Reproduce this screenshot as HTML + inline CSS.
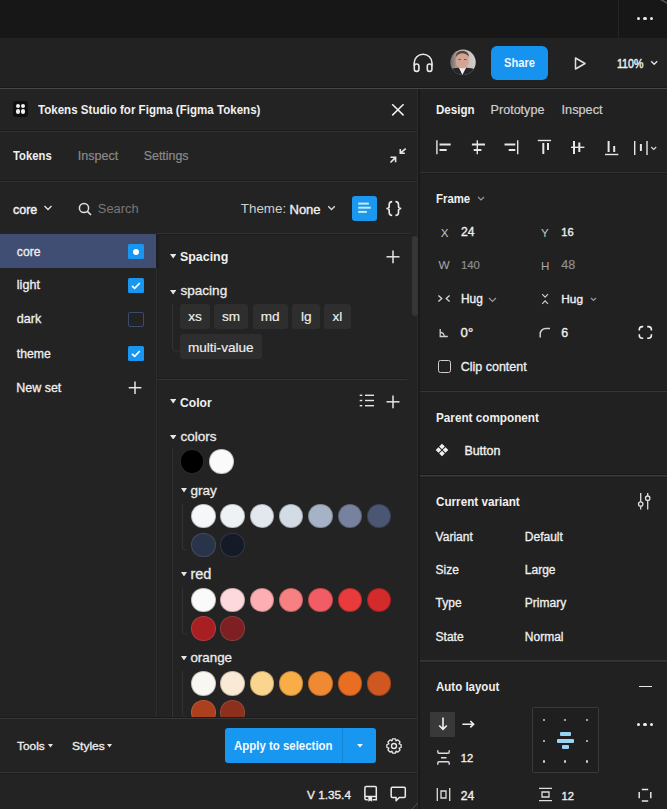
<!DOCTYPE html><html><head><meta charset="utf-8"><style>
html,body{margin:0;padding:0;width:667px;height:809px;overflow:hidden;background:#232323}
body{position:relative;font-family:"Liberation Sans",sans-serif}
.t{position:absolute;line-height:1;white-space:nowrap}
.r{position:absolute;display:block}
.chip{position:absolute;background:#2e2e2e;border-radius:3px;color:#f0f0f0;font-size:13.6px;line-height:24.5px;text-align:center;font-family:"Liberation Sans",sans-serif;-webkit-text-stroke:0.15px #f0f0f0}
.c{position:absolute;width:24.5px;height:24.5px;border-radius:50%;box-sizing:border-box;border:1px solid rgba(255,255,255,0.1)}
</style></head><body>
<div class="r" style="left:0px;top:0px;width:667px;height:38px;background:#171717;"></div>
<div class="r" style="left:618px;top:0px;width:1px;height:38px;background:#242424;"></div>
<div class="r" style="left:0px;top:38px;width:667px;height:50px;background:#222222;"></div>
<div class="r" style="left:0px;top:87px;width:667px;height:1px;background:#1a1a1a;"></div>
<div class="r" style="left:0px;top:88px;width:667px;height:1px;background:#464646;"></div>
<div class="r" style="left:0px;top:89px;width:418px;height:720px;background:#232323;"></div>
<div class="r" style="left:416.6px;top:89px;width:1px;height:720px;background:#2c2c2c;"></div>
<div class="r" style="left:418px;top:89px;width:2.2px;height:720px;background:#1a1a1a;"></div>
<div class="r" style="left:420.2px;top:89px;width:247px;height:720px;background:#212121;"></div>
<div class="r" style="left:637.1px;top:17.3px;width:3.2px;height:3.2px;background:#e8e8e8;border-radius:50%"></div>
<div class="r" style="left:643.4px;top:17.3px;width:3.2px;height:3.2px;background:#e8e8e8;border-radius:50%"></div>
<div class="r" style="left:649.6px;top:17.3px;width:3.2px;height:3.2px;background:#e8e8e8;border-radius:50%"></div>
<svg class="r" style="left:659px;top:0px;" width="8" height="5" viewBox="0 0 8 5" fill="none"><path d="M1.5 -0.5 L8.5 3.2" stroke="#5a5a5a" stroke-width="1.4" /></svg>
<svg class="r" style="left:411px;top:50px;" width="24" height="24" viewBox="0 0 24 24" fill="none"><path d="M3.2 16 V13.1 A8.9 8.9 0 0 1 21 13.1 V16" stroke="#e8e8e8" stroke-width="1.6" /><rect x="3.3" y="14" width="4.6" height="7.4" rx="2.2" stroke="#e8e8e8" stroke-width="1.6"/><rect x="16.3" y="14" width="4.6" height="7.4" rx="2.2" stroke="#e8e8e8" stroke-width="1.6"/></svg>
<svg class="r" style="left:450px;top:49px;" width="27" height="27" viewBox="0 0 27 27" fill="none"><defs><clipPath id="av"><circle cx="13" cy="13.2" r="12.7"/></clipPath><linearGradient id="ag" x1="0" y1="0" x2="1" y2="0"><stop offset="0" stop-color="#6e6462"/><stop offset="0.35" stop-color="#bdb3b0"/><stop offset="1" stop-color="#d6d0ce"/></linearGradient></defs><g clip-path="url(#av)"><rect width="27" height="27" fill="url(#ag)"/><ellipse cx="12.3" cy="11.5" rx="6.6" ry="8.3" fill="#d3a493"/><path d="M5.8 8 Q6 2 12.5 1.8 Q18.8 2 19 8 Q16 4.2 12.4 4.3 Q8.6 4.2 5.8 8 Z" fill="#5a4038"/><path d="M8.3 10.5 H10.8 M14 10.5 H16.5" stroke="#7a5048" stroke-width="1"/><path d="M0 27 V21 Q4 18.5 9 18.8 L12.4 23.5 L16 18.8 Q21 18.5 27 21 V27 Z" fill="#26262a"/><path d="M9 18.8 L12.4 26 L16 18.8 Q12.4 20.2 9 18.8 Z" fill="#eeeeee"/></g></svg>
<div class="r" style="left:491px;top:46px;width:57px;height:34px;background:#1692ef;border-radius:6px"></div>
<div class="t" style="left:503.8px;top:57.40px;font-size:12.05px;font-weight:700;color:#eef6ff;transform:scaleX(0.9259259259259258);transform-origin:0 0;">Share</div>
<svg class="r" style="left:573px;top:56px;" width="14" height="15" viewBox="0 0 14 15" fill="none"><path d="M2.5 2 L12 7.5 L2.5 13 Z" stroke="#e0e0e0" stroke-width="1.5" stroke-linejoin="round"/></svg>
<div class="t" style="left:617.1px;top:57.50px;font-size:12.40px;font-weight:400;color:#f0f0f0;-webkit-text-stroke:0.45px #f0f0f0;transform:scaleX(0.857346407324791);transform-origin:0 0;">110%</div>
<svg class="r" style="left:649.5px;top:60px;" width="9" height="6" viewBox="0 0 9 6" fill="none"><path d="M1.2 1.3 L4.2 4.3 L7.2 1.3" stroke="#e0e0e0" stroke-width="1.4" /></svg>
<div class="r" style="left:13px;top:101px;width:15px;height:16px;background:#0f0f0f;border-radius:3px"></div>
<div class="r" style="left:16.2px;top:104.2px;width:4.2px;height:4.2px;background:#f0f0f0;border-radius:50%"></div>
<div class="r" style="left:20.9px;top:104.2px;width:4.2px;height:4.2px;background:#f0f0f0;border-radius:50%"></div>
<div class="r" style="left:16.2px;top:109.4px;width:4.2px;height:4.2px;background:#f0f0f0;border-radius:50%"></div>
<div class="r" style="left:20.9px;top:109.4px;width:4.2px;height:4.2px;background:#f0f0f0;border-radius:50%"></div>
<div class="t" style="left:38px;top:103.83px;font-size:12.49px;font-weight:700;color:#f0f0f0;transform:scaleX(0.9259259259259258);transform-origin:0 0;">Tokens Studio for Figma (Figma Tokens)</div>
<svg class="r" style="left:390px;top:102px;" width="16" height="16" viewBox="0 0 16 16" fill="none"><path d="M2.2 2.3 L13.6 13.4 M13.6 2.3 L2.2 13.4" stroke="#f0f0f0" stroke-width="1.5" /></svg>
<div class="r" style="left:0px;top:130px;width:416.6px;height:1px;background:#1c1c1c;"></div>
<div class="r" style="left:0px;top:131px;width:416.6px;height:1px;background:#303030;"></div>
<div class="t" style="left:435.6px;top:104.31px;font-size:12.50px;font-weight:700;color:#f0f0f0;transform:scaleX(0.9259259259259258);transform-origin:0 0;">Design</div>
<div class="t" style="left:490.6px;top:104.26px;font-size:12.57px;font-weight:400;color:#cfcfcf;-webkit-text-stroke:0.2px #cfcfcf;">Prototype</div>
<div class="t" style="left:561.6px;top:104.16px;font-size:12.69px;font-weight:400;color:#cfcfcf;-webkit-text-stroke:0.2px #cfcfcf;">Inspect</div>
<div class="t" style="left:13.2px;top:149.97px;font-size:12.20px;font-weight:700;color:#f0f0f0;transform:scaleX(0.9259259259259258);transform-origin:0 0;">Tokens</div>
<div class="t" style="left:77.7px;top:149.67px;font-size:12.56px;font-weight:400;color:#8a8a8a;-webkit-text-stroke:0.2px #8a8a8a;">Inspect</div>
<div class="t" style="left:143.7px;top:149.78px;font-size:12.43px;font-weight:400;color:#8a8a8a;-webkit-text-stroke:0.2px #8a8a8a;">Settings</div>
<svg class="r" style="left:388px;top:145.2px;" width="20" height="20" viewBox="0 0 20 20" fill="none"><path d="M17.7 3.6 L12.3 8.2 M12.3 4.1 V8.3 H16.8 M2.5 17.5 L7.6 12.4 M2.5 12.2 H7.6 V17.2" stroke="#e6e6e6" stroke-width="1.6" /></svg>
<div class="r" style="left:0px;top:180px;width:416.6px;height:1px;background:#1c1c1c;"></div>
<div class="r" style="left:0px;top:181px;width:416.6px;height:1px;background:#303030;"></div>
<svg class="r" style="left:430px;top:135px;" width="240" height="25" viewBox="0 0 240 25" fill="none"><path d="M6.9 5.2 L6.9 19.2" stroke="#e6e6e6" stroke-width="1.4" /><path d="M9.5 9.5 L20.7 9.5" stroke="#e6e6e6" stroke-width="2" /><path d="M9.5 15 L16.7 15" stroke="#e6e6e6" stroke-width="2" /><path d="M47.3 5.2 L47.3 19.2" stroke="#e6e6e6" stroke-width="1.4" /><path d="M41.9 9.5 L55 9.5" stroke="#e6e6e6" stroke-width="2" /><path d="M43.7 15 L51.4 15" stroke="#e6e6e6" stroke-width="2" /><path d="M87.7 5.2 L87.7 19.2" stroke="#e6e6e6" stroke-width="1.4" /><path d="M74.5 9.5 L85.3 9.5" stroke="#e6e6e6" stroke-width="2" /><path d="M78.7 15 L85.3 15" stroke="#e6e6e6" stroke-width="2" /><path d="M107.8 5.5 L121.1 5.5" stroke="#e6e6e6" stroke-width="1.4" /><path d="M113.3 8 L113.3 19" stroke="#e6e6e6" stroke-width="2" /><path d="M118 8 L118 15" stroke="#e6e6e6" stroke-width="2" /><path d="M141 12.3 L154.4 12.3" stroke="#e6e6e6" stroke-width="1.4" /><path d="M144 6 L144 19" stroke="#e6e6e6" stroke-width="2" /><path d="M149.3 7.5 L149.3 17" stroke="#e6e6e6" stroke-width="2" /><path d="M175 19.5 L188.3 19.5" stroke="#e6e6e6" stroke-width="1.4" /><path d="M178.6 6 L178.6 17" stroke="#e6e6e6" stroke-width="2" /><path d="M184.2 11 L184.2 17" stroke="#e6e6e6" stroke-width="2" /><path d="M204.7 6 L204.7 20" stroke="#e6e6e6" stroke-width="1.4" /><path d="M217 6 L217 20" stroke="#e6e6e6" stroke-width="1.4" /><path d="M210.9 9 L210.9 16" stroke="#e6e6e6" stroke-width="2" /><path d="M221.2 12 L223.7 14.5 L226.2 12" stroke="#d8d8d8" stroke-width="1.2" /></svg>
<div class="r" style="left:420.2px;top:173px;width:248px;height:1px;background:#1c1c1c;"></div>
<div class="r" style="left:420.2px;top:172px;width:248px;height:1px;background:#333333;"></div>
<div class="t" style="left:12.5px;top:203.50px;font-size:12.40px;font-weight:400;color:#f0f0f0;-webkit-text-stroke:0.45px #f0f0f0;transform:scaleX(1.0033193493971533);transform-origin:0 0;">core</div>
<svg class="r" style="left:43px;top:204px;" width="10" height="8" viewBox="0 0 10 8" fill="none"><path d="M1.5 2 L5 5.5 L8.5 2" stroke="#e0e0e0" stroke-width="1.4" /></svg>
<svg class="r" style="left:77.5px;top:202px;" width="14" height="14" viewBox="0 0 14 14" fill="none"><circle cx="6" cy="6" r="4.6" stroke="#e0e0e0" stroke-width="1.5"/><path d="M9.4 9.4 L13 13" stroke="#e0e0e0" stroke-width="1.6" /></svg>
<div class="t" style="left:97.8px;top:202.90px;font-size:12.88px;font-weight:400;color:#787878;">Search</div>
<div class="t" style="left:240.8px;top:202.49px;font-size:13.36px;font-weight:400;color:#cfcfcf;">Theme:</div>
<div class="t" style="left:289.5px;top:202.79px;font-size:13.01px;font-weight:400;color:#f0f0f0;-webkit-text-stroke:0.35px #f0f0f0;">None</div>
<svg class="r" style="left:327px;top:205px;" width="9" height="7" viewBox="0 0 9 7" fill="none"><path d="M1.2 1.2 L4.5 4.5 L7.8 1.2" stroke="#d8d8d8" stroke-width="1.3" /></svg>
<div class="r" style="left:352px;top:196px;width:25.3px;height:25px;background:#1b98ee;border-radius:3px"></div>
<svg class="r" style="left:352px;top:196px;" width="26" height="25" viewBox="0 0 26 25" fill="none"><path d="M6.2 7.6 L16.9 7.6" stroke="#bfeaff" stroke-width="2" /><path d="M6.2 11.7 L18.8 11.7" stroke="#bfeaff" stroke-width="2" /><path d="M6.2 15.9 L14.9 15.9" stroke="#bfeaff" stroke-width="2" /></svg>
<svg class="r" style="left:385px;top:200px;" width="18" height="17" viewBox="0 0 18 17" fill="none"><path d="M7.2 1.6 Q4.2 1.6 4.2 4.6 V6.5 Q4.2 8.5 1.4 8.5 Q4.2 8.5 4.2 10.5 V12.4 Q4.2 15.4 7.2 15.4 M10.5 1.6 Q13.5 1.6 13.5 4.6 V6.5 Q13.5 8.5 16.3 8.5 Q13.5 8.5 13.5 10.5 V12.4 Q13.5 15.4 10.5 15.4" stroke="#ececec" stroke-width="1.6" /></svg>
<div class="r" style="left:157px;top:234px;width:254px;height:1px;background:#1c1c1c;"></div>
<div class="r" style="left:157px;top:233px;width:254px;height:1px;background:#343434;"></div>
<div class="r" style="left:0px;top:233.5px;width:156.3px;height:34.6px;background:#414e74;"></div>
<div class="r" style="left:156.3px;top:234px;width:2.5px;height:34.3px;background:#1d1d22;"></div>
<div class="r" style="left:156.3px;top:268.3px;width:1px;height:450px;background:#2e2e2e;"></div>
<div class="r" style="left:157.3px;top:268.3px;width:1px;height:450px;background:#1f1f1f;"></div>
<div class="t" style="left:16.8px;top:245.99px;font-size:12.18px;font-weight:400;color:#f0f0f0;-webkit-text-stroke:0.3px #f0f0f0;">core</div>
<div class="t" style="left:16.8px;top:279.44px;font-size:12.59px;font-weight:400;color:#f0f0f0;-webkit-text-stroke:0.3px #f0f0f0;">light</div>
<div class="t" style="left:16.8px;top:313.44px;font-size:12.60px;font-weight:400;color:#f0f0f0;-webkit-text-stroke:0.3px #f0f0f0;">dark</div>
<div class="t" style="left:16.8px;top:347.74px;font-size:12.23px;font-weight:400;color:#f0f0f0;-webkit-text-stroke:0.3px #f0f0f0;">theme</div>
<div class="t" style="left:16.3px;top:381.95px;font-size:12.46px;font-weight:400;color:#f0f0f0;-webkit-text-stroke:0.3px #f0f0f0;">New set</div>
<div class="r" style="left:128.3px;top:244.3px;width:15.5px;height:15px;background:#1896f0;border-radius:1.5px"></div>
<div class="r" style="left:132.8px;top:248.60000000000002px;width:6.5px;height:6.5px;background:#fff;border-radius:50%"></div>
<div class="r" style="left:128.3px;top:278.3px;width:15.5px;height:15px;background:#1896f0;border-radius:1.5px"></div>
<svg class="r" style="left:128.3px;top:278.3px;" width="15.5" height="15" viewBox="0 0 15.5 15" fill="none"><path d="M4 7.8 L6.7 10.3 L11.8 5" stroke="#fff" stroke-width="1.7" /></svg>
<div class="r" style="left:128.3px;top:312.3px;width:15.5px;height:15px;background:#232323;border:1px solid #3b4b6b;box-sizing:border-box;border-radius:2px"></div>
<div class="r" style="left:128.3px;top:346.3px;width:15.5px;height:15px;background:#1896f0;border-radius:1.5px"></div>
<svg class="r" style="left:128.3px;top:346.3px;" width="15.5" height="15" viewBox="0 0 15.5 15" fill="none"><path d="M4 7.8 L6.7 10.3 L11.8 5" stroke="#fff" stroke-width="1.7" /></svg>
<svg class="r" style="left:128px;top:381px;" width="14" height="14" viewBox="0 0 14 14" fill="none"><path d="M7 0.5 L7 13" stroke="#e6e6e6" stroke-width="1.5" /><path d="M0.7 6.7 L13.4 6.7" stroke="#e6e6e6" stroke-width="1.5" /></svg>
<div class="r" style="left:411.5px;top:236px;width:6.3px;height:80px;background:#363636;border-radius:3px"></div>
<svg class="r" style="left:169.8px;top:254px;" width="6.4" height="4.6" viewBox="0 0 6.4 4.6" fill="none"><path d="M0 0 H6.4 L3.2 4.6 Z" fill="#e6e6e6"/></svg>
<div class="t" style="left:180px;top:250.15px;font-size:13.41px;font-weight:700;color:#f0f0f0;transform:scaleX(0.9259259259259258);transform-origin:0 0;">Spacing</div>
<svg class="r" style="left:385.5px;top:249.5px;" width="14" height="14" viewBox="0 0 14 14" fill="none"><path d="M7 0.5 L7 13.2" stroke="#e6e6e6" stroke-width="1.5" /><path d="M0.5 6.8 L13.5 6.8" stroke="#e6e6e6" stroke-width="1.5" /></svg>
<svg class="r" style="left:169.8px;top:290.3px;" width="6.4" height="4.6" viewBox="0 0 6.4 4.6" fill="none"><path d="M0 0 H6.4 L3.2 4.6 Z" fill="#e6e6e6"/></svg>
<div class="t" style="left:180.5px;top:284.23px;font-size:13.55px;font-weight:400;color:#ececec;-webkit-text-stroke:0.3px #ececec;">spacing</div>
<svg class="r" style="left:171px;top:304px;" width="12" height="52" viewBox="0 0 12 52" fill="none"><path d="M1.5 0 V44 Q1.5 47 4.5 47 H9" stroke="#333" stroke-width="1" /></svg>
<div class="chip" style="left:179.6px;top:304px;width:30.7px;height:25px;line-height:26.5px">xs</div>
<div class="chip" style="left:214.3px;top:304px;width:33.5px;height:25px;line-height:26.5px">sm</div>
<div class="chip" style="left:252.7px;top:304px;width:35.1px;height:25px;line-height:26.5px">md</div>
<div class="chip" style="left:292.4px;top:304px;width:27.6px;height:25px;line-height:26.5px">lg</div>
<div class="chip" style="left:324px;top:304px;width:26.8px;height:25px;line-height:26.5px">xl</div>
<div class="chip" style="left:179.6px;top:333.5px;width:82.4px;height:25.5px;line-height:27px">multi-value</div>
<div class="r" style="left:157px;top:378px;width:250px;height:1px;background:#1c1c1c;"></div>
<div class="r" style="left:157px;top:379px;width:250px;height:1px;background:#343434;"></div>
<svg class="r" style="left:169.8px;top:399px;" width="6.4" height="4.6" viewBox="0 0 6.4 4.6" fill="none"><path d="M0 0 H6.4 L3.2 4.6 Z" fill="#e6e6e6"/></svg>
<div class="t" style="left:180.2px;top:395.50px;font-size:13.11px;font-weight:700;color:#f0f0f0;transform:scaleX(0.9259259259259258);transform-origin:0 0;">Color</div>
<svg class="r" style="left:359px;top:393px;" width="16" height="15" viewBox="0 0 16 15" fill="none"><path d="M6 2.3 L15 2.3" stroke="#e6e6e6" stroke-width="1.4" /><path d="M6 7.5 L15 7.5" stroke="#e6e6e6" stroke-width="1.4" /><path d="M6 12.7 L15 12.7" stroke="#e6e6e6" stroke-width="1.4" /><path d="M0.7 2.3 L3.3 2.3" stroke="#e6e6e6" stroke-width="1.4" /><path d="M0.7 7.5 L3.3 7.5" stroke="#e6e6e6" stroke-width="1.4" /><path d="M0.7 12.7 L3.3 12.7" stroke="#e6e6e6" stroke-width="1.4" /></svg>
<svg class="r" style="left:385.5px;top:394.5px;" width="14" height="14" viewBox="0 0 14 14" fill="none"><path d="M7 0.5 L7 13.2" stroke="#e6e6e6" stroke-width="1.5" /><path d="M0.5 6.8 L13.5 6.8" stroke="#e6e6e6" stroke-width="1.5" /></svg>
<svg class="r" style="left:169.8px;top:434.5px;" width="6.4" height="4.6" viewBox="0 0 6.4 4.6" fill="none"><path d="M0 0 H6.4 L3.2 4.6 Z" fill="#e6e6e6"/></svg>
<div class="t" style="left:180.5px;top:429.58px;font-size:13.50px;font-weight:400;color:#ececec;-webkit-text-stroke:0.3px #ececec;">colors</div>
<div class="r" style="left:170.8px;top:449px;width:1px;height:269px;background:#1e1e1e;"></div>
<div class="r" style="left:171.8px;top:449px;width:1px;height:269px;background:#343434;"></div>
<div class="c" style="left:179.9px;top:449.0px;background:#000;border-color:rgba(255,255,255,0.16)"></div>
<div class="c" style="left:209.4px;top:449.0px;background:#fafafa;border-color:rgba(0,0,0,0.22)"></div>
<svg class="r" style="left:180.6px;top:488.0px;" width="6" height="4.5" viewBox="0 0 6 4.5" fill="none"><path d="M0 0 H6 L3.0 4.5 Z" fill="#e6e6e6"/></svg>
<div class="t" style="left:190.4px;top:483.51px;font-size:13.57px;font-weight:400;color:#ececec;-webkit-text-stroke:0.3px #ececec;">gray</div>
<svg class="r" style="left:181px;top:503.7px;" width="8" height="51" viewBox="0 0 8 51" fill="none"><path d="M1.5 0 V43 Q1.5 46 4.5 46 H6" stroke="#333" stroke-width="1" /></svg>
<div class="c" style="left:191.0px;top:503.7px;background:#f6f7f9;border-color:rgba(0,0,0,0.22)"></div>
<div class="c" style="left:220.3px;top:503.7px;background:#eef2f5;border-color:rgba(0,0,0,0.22)"></div>
<div class="c" style="left:249.6px;top:503.7px;background:#e3e8ee;border-color:rgba(0,0,0,0.22)"></div>
<div class="c" style="left:278.9px;top:503.7px;background:#d3dbe4;border-color:rgba(0,0,0,0.22)"></div>
<div class="c" style="left:308.2px;top:503.7px;background:#a6b2c5;border-color:rgba(0,0,0,0.22)"></div>
<div class="c" style="left:337.5px;top:503.7px;background:#76829e;border-color:rgba(0,0,0,0.22)"></div>
<div class="c" style="left:366.8px;top:503.7px;background:#4b5672;border-color:rgba(0,0,0,0.22)"></div>
<div class="c" style="left:191.0px;top:532.5px;background:#29334a;border-color:rgba(255,255,255,0.12)"></div>
<div class="c" style="left:220.3px;top:532.5px;background:#151a28;border-color:rgba(255,255,255,0.12)"></div>
<svg class="r" style="left:180.6px;top:571.8px;" width="6" height="4.5" viewBox="0 0 6 4.5" fill="none"><path d="M0 0 H6 L3.0 4.5 Z" fill="#e6e6e6"/></svg>
<div class="t" style="left:190.4px;top:566.50px;font-size:14.53px;font-weight:400;color:#ececec;-webkit-text-stroke:0.3px #ececec;">red</div>
<svg class="r" style="left:181px;top:587.5px;" width="8" height="51" viewBox="0 0 8 51" fill="none"><path d="M1.5 0 V43 Q1.5 46 4.5 46 H6" stroke="#333" stroke-width="1" /></svg>
<div class="c" style="left:191.0px;top:587.5px;background:#fafafa;border-color:rgba(0,0,0,0.22)"></div>
<div class="c" style="left:220.3px;top:587.5px;background:#fdd9dd;border-color:rgba(0,0,0,0.22)"></div>
<div class="c" style="left:249.6px;top:587.5px;background:#fcaeb3;border-color:rgba(0,0,0,0.22)"></div>
<div class="c" style="left:278.9px;top:587.5px;background:#f78182;border-color:rgba(0,0,0,0.22)"></div>
<div class="c" style="left:308.2px;top:587.5px;background:#f25d65;border-color:rgba(0,0,0,0.22)"></div>
<div class="c" style="left:337.5px;top:587.5px;background:#e93a3c;border-color:rgba(0,0,0,0.22)"></div>
<div class="c" style="left:366.8px;top:587.5px;background:#d32a2c;border-color:rgba(0,0,0,0.22)"></div>
<div class="c" style="left:191.0px;top:616.3px;background:#a71f23;border-color:rgba(255,255,255,0.12)"></div>
<div class="c" style="left:220.3px;top:616.3px;background:#7d1f23;border-color:rgba(255,255,255,0.12)"></div>
<svg class="r" style="left:180.6px;top:655.7px;" width="6" height="4.5" viewBox="0 0 6 4.5" fill="none"><path d="M0 0 H6 L3.0 4.5 Z" fill="#e6e6e6"/></svg>
<div class="t" style="left:190.4px;top:651.39px;font-size:13.36px;font-weight:400;color:#ececec;-webkit-text-stroke:0.3px #ececec;">orange</div>
<svg class="r" style="left:181px;top:671.4000000000001px;" width="8" height="51" viewBox="0 0 8 51" fill="none"><path d="M1.5 0 V43 Q1.5 46 4.5 46 H6" stroke="#333" stroke-width="1" /></svg>
<div class="c" style="left:191.0px;top:671.4px;background:#f9f7f2;border-color:rgba(0,0,0,0.22)"></div>
<div class="c" style="left:220.3px;top:671.4px;background:#f8ead4;border-color:rgba(0,0,0,0.22)"></div>
<div class="c" style="left:249.6px;top:671.4px;background:#fad590;border-color:rgba(0,0,0,0.22)"></div>
<div class="c" style="left:278.9px;top:671.4px;background:#f8ad48;border-color:rgba(0,0,0,0.22)"></div>
<div class="c" style="left:308.2px;top:671.4px;background:#f08a32;border-color:rgba(0,0,0,0.22)"></div>
<div class="c" style="left:337.5px;top:671.4px;background:#e96e22;border-color:rgba(0,0,0,0.22)"></div>
<div class="c" style="left:366.8px;top:671.4px;background:#cf5720;border-color:rgba(0,0,0,0.22)"></div>
<div class="c" style="left:191.0px;top:700.2px;background:#ac401e;border-color:rgba(255,255,255,0.12)"></div>
<div class="c" style="left:220.3px;top:700.2px;background:#8c301d;border-color:rgba(255,255,255,0.12)"></div>
<div class="r" style="left:0px;top:718.5px;width:416.5px;height:91px;background:#232323;"></div>
<div class="r" style="left:0px;top:717px;width:416.6px;height:1px;background:#1c1c1c;"></div>
<div class="r" style="left:0px;top:718px;width:416.6px;height:1px;background:#363636;"></div>
<div class="t" style="left:17.3px;top:740.93px;font-size:11.30px;font-weight:400;color:#f0f0f0;-webkit-text-stroke:0.3px #f0f0f0;transform:scaleX(1.0501001054364953);transform-origin:0 0;">Tools</div>
<svg class="r" style="left:47.8px;top:744px;" width="5" height="3.5" viewBox="0 0 5 3.5" fill="none"><path d="M0 0 H5 L2.5 3.5 Z" fill="#e6e6e6"/></svg>
<div class="t" style="left:72px;top:740.93px;font-size:11.30px;font-weight:400;color:#f0f0f0;-webkit-text-stroke:0.3px #f0f0f0;transform:scaleX(1.0659278833166441);transform-origin:0 0;">Styles</div>
<svg class="r" style="left:107.2px;top:744px;" width="5" height="3.5" viewBox="0 0 5 3.5" fill="none"><path d="M0 0 H5 L2.5 3.5 Z" fill="#e6e6e6"/></svg>
<div class="r" style="left:224.5px;top:727.6px;width:151.4px;height:35.8px;background:#1797f0;border-radius:3px"></div>
<div class="r" style="left:342px;top:727.6px;width:1px;height:35.8px;background:#1484d6;"></div>
<div class="t" style="left:234.4px;top:740.03px;font-size:12.37px;font-weight:700;color:#f4faff;transform:scaleX(0.9259259259259258);transform-origin:0 0;">Apply to selection</div>
<svg class="r" style="left:356.8px;top:744.2px;" width="6" height="3.6" viewBox="0 0 6 3.6" fill="none"><path d="M0 0 H6 L3.0 3.6 Z" fill="#f4faff"/></svg>
<svg class="r" style="left:385px;top:737px;" width="18" height="18" viewBox="0 0 18 18" fill="none"><circle cx="9" cy="9" r="2.5" stroke="#e8e8e8" stroke-width="1.4"/><path d="M7.5 1.8 H10.5 L11 3.8 L12.9 2.9 L15 5 L14.1 6.9 L16.1 7.5 V10.5 L14.1 11.1 L15 13 L12.9 15.1 L11 14.2 L10.5 16.2 H7.5 L7 14.2 L5.1 15.1 L3 13 L3.9 11.1 L1.9 10.5 V7.5 L3.9 6.9 L3 5 L5.1 2.9 L7 3.8 Z" stroke="#e8e8e8" stroke-width="1.3" stroke-linejoin="round"/></svg>
<div class="r" style="left:0px;top:773px;width:416.6px;height:1px;background:#1c1c1c;"></div>
<div class="r" style="left:0px;top:772px;width:416.6px;height:1px;background:#343434;"></div>
<div class="t" style="left:307px;top:789.50px;font-size:11.81px;font-weight:400;color:#ececec;-webkit-text-stroke:0.35px #ececec;">V 1.35.4</div>
<svg class="r" style="left:362px;top:784px;" width="17" height="19" viewBox="0 0 17 19" fill="none"><path d="M5.8 15.8 H4.2 Q2.9 15.8 2.9 14.5 V3.7 Q2.9 2.4 4.2 2.4 H13.1 Q14.3 2.4 14.3 3.6 V15.8 H10.6 M2.9 12.6 H14.3" stroke="#ececec" stroke-width="1.5" /><path d="M6.3 13 H10.1 V17.8 L8.2 16.4 L6.3 17.8 Z" fill="#ececec"/></svg>
<svg class="r" style="left:389px;top:784px;" width="18" height="19" viewBox="0 0 18 19" fill="none"><path d="M3.3 3.3 H15.2 Q16.3 3.3 16.3 4.4 V12.3 Q16.3 13.4 15.2 13.4 H10.3 L7.1 16.8 V13.4 H3.3 Q2.2 13.4 2.2 12.3 V4.4 Q2.2 3.3 3.3 3.3 Z" stroke="#ececec" stroke-width="1.5" stroke-linejoin="round"/></svg>
<svg class="r" style="left:406px;top:795px;" width="12" height="14" viewBox="0 0 12 14" fill="none"><path d="M12 8 L6 14" stroke="#505050" stroke-width="1" /></svg>
<div class="t" style="left:435.8px;top:193.08px;font-size:12.31px;font-weight:700;color:#f0f0f0;transform:scaleX(0.9259259259259258);transform-origin:0 0;">Frame</div>
<svg class="r" style="left:476.5px;top:196px;" width="8" height="6" viewBox="0 0 8 6" fill="none"><path d="M1 1 L4 4 L7 1" stroke="#9a9a9a" stroke-width="1.2" /></svg>
<div class="t" style="left:440.8px;top:226.88px;font-size:11.60px;font-weight:400;color:#c4c4c4;">X</div>
<div class="t" style="left:461px;top:226.42px;font-size:12.14px;font-weight:400;color:#f0f0f0;-webkit-text-stroke:0.35px #f0f0f0;">24</div>
<div class="t" style="left:540.9px;top:226.68px;font-size:11.60px;font-weight:400;color:#c4c4c4;">Y</div>
<div class="t" style="left:561.3px;top:227.06px;font-size:11.15px;font-weight:400;color:#f0f0f0;-webkit-text-stroke:0.35px #f0f0f0;">16</div>
<div class="t" style="left:438.5px;top:260.01px;font-size:11.80px;font-weight:400;color:#aaaaaa;">W</div>
<div class="t" style="left:461px;top:260.41px;font-size:11.33px;font-weight:400;color:#8e8e8e;-webkit-text-stroke:0.2px #8e8e8e;">140</div>
<div class="t" style="left:540.9px;top:260.18px;font-size:11.60px;font-weight:400;color:#aaaaaa;">H</div>
<div class="t" style="left:561.3px;top:259.34px;font-size:12.59px;font-weight:400;color:#8e8e8e;-webkit-text-stroke:0.2px #8e8e8e;">48</div>
<svg class="r" style="left:437px;top:294px;" width="14" height="9" viewBox="0 0 14 9" fill="none"><path d="M1.4 1.5 L4.8 4.5 L1.4 7.5 M12.6 1.5 L9.2 4.5 L12.6 7.5" stroke="#d8d8d8" stroke-width="1.3" /></svg>
<div class="t" style="left:461px;top:294.04px;font-size:11.88px;font-weight:400;color:#f0f0f0;-webkit-text-stroke:0.35px #f0f0f0;">Hug</div>
<svg class="r" style="left:488px;top:297px;" width="9" height="6" viewBox="0 0 9 6" fill="none"><path d="M1 1 L4.5 4.5 L8 1" stroke="#9a9a9a" stroke-width="1.2" /></svg>
<svg class="r" style="left:540.5px;top:293px;" width="9" height="12" viewBox="0 0 9 12" fill="none"><path d="M1.2 1.2 L4.1 4.1 L7 1.2 M1.2 10.8 L4.1 7.9 L7 10.8" stroke="#d0d0d0" stroke-width="1.2" /></svg>
<div class="t" style="left:561.3px;top:293.89px;font-size:11.83px;font-weight:400;color:#f0f0f0;-webkit-text-stroke:0.35px #f0f0f0;">Hug</div>
<svg class="r" style="left:589.5px;top:296.5px;" width="8" height="6" viewBox="0 0 8 6" fill="none"><path d="M1 1 L3.5 3.5 L6 1" stroke="#9a9a9a" stroke-width="1.2" /></svg>
<svg class="r" style="left:438px;top:327px;" width="11" height="11" viewBox="0 0 11 11" fill="none"><path d="M2.2 2 V9.5 H9.8 M2.2 5.2 Q5.9 5.8 6.3 9.5" stroke="#d0d0d0" stroke-width="1.3" /></svg>
<div class="t" style="left:460.6px;top:326.34px;font-size:13.18px;font-weight:400;color:#f0f0f0;-webkit-text-stroke:0.35px #f0f0f0;">0°</div>
<svg class="r" style="left:539px;top:327px;" width="12" height="11" viewBox="0 0 12 11" fill="none"><path d="M1.2 10.5 V7 A5.5 5.5 0 0 1 6.7 1.5 H11" stroke="#d0d0d0" stroke-width="1.5" /></svg>
<div class="t" style="left:561.3px;top:327.00px;font-size:12.41px;font-weight:400;color:#f0f0f0;-webkit-text-stroke:0.35px #f0f0f0;">6</div>
<svg class="r" style="left:637px;top:324px;" width="17" height="17" viewBox="0 0 17 17" fill="none"><path d="M2.3 6.5 V5.6 Q2.3 2.6 5.3 2.6 H6.2 M10.2 2.6 H11.4 Q14.4 2.6 14.4 5.6 V6.5 M14.4 10.3 V11.3 Q14.4 14.3 11.4 14.3 H10.2 M6.2 14.3 H5.3 Q2.3 14.3 2.3 11.3 V10.3" stroke="#f0f0f0" stroke-width="1.6" /></svg>
<div class="r" style="left:437.5px;top:359.5px;width:13.2px;height:13.2px;background:transparent;border:1.4px solid #d0d0d0;border-radius:2.5px;box-sizing:border-box"></div>
<div class="t" style="left:460.7px;top:360.72px;font-size:12.50px;font-weight:400;color:#f0f0f0;-webkit-text-stroke:0.3px #f0f0f0;">Clip content</div>
<div class="r" style="left:420.2px;top:390px;width:248px;height:1px;background:#1c1c1c;"></div>
<div class="r" style="left:420.2px;top:391px;width:248px;height:1px;background:#363636;"></div>
<div class="t" style="left:435.6px;top:411.58px;font-size:12.66px;font-weight:700;color:#f0f0f0;transform:scaleX(0.9259259259259258);transform-origin:0 0;">Parent component</div>
<svg class="r" style="left:435px;top:443.3px;" width="14" height="14" viewBox="0 0 14 14" fill="none"><path d="M7 0.7000000000000002 L9.8 3.5 L7 6.3 L4.2 3.5 Z M7 7.7 L9.8 10.5 L7 13.3 L4.2 10.5 Z M3.5 4.2 L6.3 7 L3.5 9.8 L0.7000000000000002 7 Z M10.5 4.2 L13.3 7 L10.5 9.8 L7.7 7 Z" fill="#f2f2f2"/></svg>
<div class="t" style="left:464.4px;top:444.96px;font-size:12.45px;font-weight:400;color:#f0f0f0;-webkit-text-stroke:0.35px #f0f0f0;">Button</div>
<div class="r" style="left:420.2px;top:474px;width:248px;height:1px;background:#1b1b1b;"></div>
<div class="r" style="left:420.2px;top:475px;width:248px;height:1px;background:#3a3a3a;"></div>
<div class="r" style="left:420.2px;top:476px;width:248px;height:1px;background:#2e2e2e;"></div>
<div class="r" style="left:420.2px;top:477px;width:248px;height:1px;background:#1c1c1c;"></div>
<div class="t" style="left:435.6px;top:496.12px;font-size:12.61px;font-weight:700;color:#f0f0f0;transform:scaleX(0.9259259259259258);transform-origin:0 0;">Current variant</div>
<svg class="r" style="left:636px;top:492px;" width="17" height="19" viewBox="0 0 17 19" fill="none"><path d="M4.7 1 V17.5 M11.7 1 V17.5" stroke="#dddddd" stroke-width="1.3" /><circle cx="4.7" cy="12" r="2.2" fill="#202020" stroke="#ddd" stroke-width="1.3"/><circle cx="11.7" cy="6.2" r="2.2" fill="#202020" stroke="#ddd" stroke-width="1.3"/></svg>
<div class="t" style="left:435.6px;top:530.74px;font-size:12.00px;font-weight:400;color:#f0f0f0;-webkit-text-stroke:0.3px #f0f0f0;">Variant</div>
<div class="t" style="left:524.8px;top:530.74px;font-size:12.00px;font-weight:400;color:#f0f0f0;-webkit-text-stroke:0.3px #f0f0f0;">Default</div>
<div class="t" style="left:435.6px;top:564.09px;font-size:12.00px;font-weight:400;color:#f0f0f0;-webkit-text-stroke:0.3px #f0f0f0;">Size</div>
<div class="t" style="left:524.8px;top:564.09px;font-size:12.00px;font-weight:400;color:#f0f0f0;-webkit-text-stroke:0.3px #f0f0f0;">Large</div>
<div class="t" style="left:435.6px;top:597.44px;font-size:12.00px;font-weight:400;color:#f0f0f0;-webkit-text-stroke:0.3px #f0f0f0;">Type</div>
<div class="t" style="left:524.8px;top:597.44px;font-size:12.00px;font-weight:400;color:#f0f0f0;-webkit-text-stroke:0.3px #f0f0f0;">Primary</div>
<div class="t" style="left:435.6px;top:630.79px;font-size:12.00px;font-weight:400;color:#f0f0f0;-webkit-text-stroke:0.3px #f0f0f0;">State</div>
<div class="t" style="left:524.8px;top:630.79px;font-size:12.00px;font-weight:400;color:#f0f0f0;-webkit-text-stroke:0.3px #f0f0f0;">Normal</div>
<div class="r" style="left:420.2px;top:660px;width:248px;height:1.5px;background:#333333;"></div>
<div class="r" style="left:420.2px;top:661.5px;width:248px;height:1px;background:#1c1c1c;"></div>
<div class="t" style="left:435.6px;top:681.48px;font-size:12.43px;font-weight:700;color:#f0f0f0;transform:scaleX(0.9259259259259258);transform-origin:0 0;">Auto layout</div>
<div class="r" style="left:638.5px;top:686.2px;width:13px;height:1.2px;background:#e8e8e8;"></div>
<div class="r" style="left:430px;top:712px;width:24.7px;height:24.5px;background:#393939;border-radius:1px"></div>
<svg class="r" style="left:436px;top:716px;" width="14" height="16" viewBox="0 0 14 16" fill="none"><path d="M7 1.5 V13 M3.2 9.5 L7 13.3 L10.8 9.5" stroke="#f0f0f0" stroke-width="1.6" /></svg>
<svg class="r" style="left:460px;top:717px;" width="16" height="14" viewBox="0 0 16 14" fill="none"><path d="M2.4 7.2 H13.5 M10.3 4 L13.6 7.2 L10.3 10.4" stroke="#f0f0f0" stroke-width="1.6" /></svg>
<div class="r" style="left:532.2px;top:707.2px;width:66.8px;height:66.2px;background:#1f1f1f;border:1px solid #3a3a3a;box-sizing:border-box;border-radius:1.5px"></div>
<div class="r" style="left:542.85px;top:718.85px;width:2.3px;height:2.3px;background:#cfcfcf;border-radius:50%"></div>
<div class="r" style="left:564.0500000000001px;top:718.85px;width:2.3px;height:2.3px;background:#cfcfcf;border-radius:50%"></div>
<div class="r" style="left:585.5500000000001px;top:718.85px;width:2.3px;height:2.3px;background:#cfcfcf;border-radius:50%"></div>
<div class="r" style="left:542.85px;top:739.75px;width:2.3px;height:2.3px;background:#cfcfcf;border-radius:50%"></div>
<div class="r" style="left:585.5500000000001px;top:739.75px;width:2.3px;height:2.3px;background:#cfcfcf;border-radius:50%"></div>
<div class="r" style="left:542.85px;top:760.35px;width:2.3px;height:2.3px;background:#cfcfcf;border-radius:50%"></div>
<div class="r" style="left:564.0500000000001px;top:760.35px;width:2.3px;height:2.3px;background:#cfcfcf;border-radius:50%"></div>
<div class="r" style="left:585.5500000000001px;top:760.35px;width:2.3px;height:2.3px;background:#cfcfcf;border-radius:50%"></div>
<div class="r" style="left:560.1px;top:732.2px;width:11.2px;height:4.3px;background:#98d5f4;border-radius:1px"></div>
<div class="r" style="left:556.8px;top:738.9px;width:17.6px;height:4.3px;background:#98d5f4;border-radius:1px"></div>
<div class="r" style="left:561.8px;top:745px;width:7.5px;height:4.1px;background:#98d5f4;border-radius:1px"></div>
<div class="r" style="left:636.6px;top:722.5px;width:3.2px;height:3.2px;background:#eeeeee;border-radius:50%"></div>
<div class="r" style="left:643.4px;top:722.5px;width:3.2px;height:3.2px;background:#eeeeee;border-radius:50%"></div>
<div class="r" style="left:650.1999999999999px;top:722.5px;width:3.2px;height:3.2px;background:#eeeeee;border-radius:50%"></div>
<svg class="r" style="left:436px;top:748.5px;" width="16" height="17" viewBox="0 0 16 17" fill="none"><path d="M1.8 1.2 V3 Q1.8 4.3 3 4.3 H12 Q13.2 4.3 13.2 3 V1.2 M1.8 15.8 V14 Q1.8 12.7 3 12.7 H12 Q13.2 12.7 13.2 14 V15.8 M5 8.7 H10.5" stroke="#dddddd" stroke-width="1.4" /></svg>
<div class="t" style="left:460.7px;top:752.86px;font-size:11.15px;font-weight:400;color:#f0f0f0;-webkit-text-stroke:0.35px #f0f0f0;">12</div>
<svg class="r" style="left:436px;top:787px;" width="15" height="15" viewBox="0 0 15 15" fill="none"><path d="M1.3 1 V14 M13.7 1 V14 M5 4 H10 V11 H5 Z" stroke="#dddddd" stroke-width="1.3" /></svg>
<div class="t" style="left:460.7px;top:789.82px;font-size:12.14px;font-weight:400;color:#f0f0f0;-webkit-text-stroke:0.35px #f0f0f0;">24</div>
<svg class="r" style="left:537.5px;top:787px;" width="15" height="15" viewBox="0 0 15 15" fill="none"><path d="M1 1.3 H14 M1 13.7 H14 M4 5 H11 V10 H4 Z" stroke="#dddddd" stroke-width="1.3" /></svg>
<div class="t" style="left:561.5px;top:790.66px;font-size:11.15px;font-weight:400;color:#f0f0f0;-webkit-text-stroke:0.35px #f0f0f0;">12</div>
<svg class="r" style="left:637px;top:787px;" width="16" height="16" viewBox="0 0 16 16" fill="none"><path d="M4.8 2.4 H11.2 M4.8 14 H11.2 M2.2 4.9 V11.2 M13.8 4.9 V11.2" stroke="#e6e6e6" stroke-width="1.5" /></svg>
</body></html>
